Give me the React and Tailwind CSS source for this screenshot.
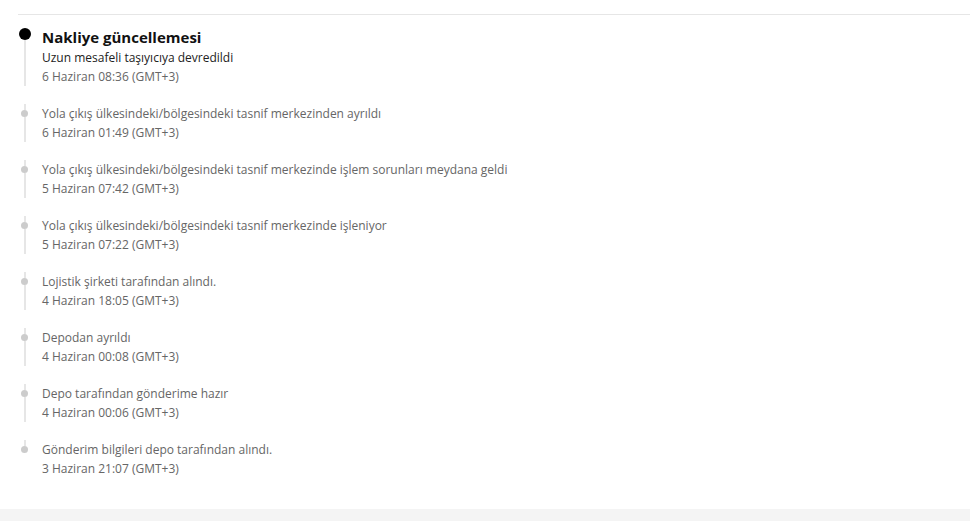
import React from 'react';

const events = [
  { text: 'Yola çıkış ülkesindeki/bölgesindeki tasnif merkezinden ayrıldı', date: '6 Haziran 01:49 (GMT+3)' },
  { text: 'Yola çıkış ülkesindeki/bölgesindeki tasnif merkezinde işlem sorunları meydana geldi', date: '5 Haziran 07:42 (GMT+3)' },
  { text: 'Yola çıkış ülkesindeki/bölgesindeki tasnif merkezinde işleniyor', date: '5 Haziran 07:22 (GMT+3)' },
  { text: 'Lojistik şirketi tarafından alındı.', date: '4 Haziran 18:05 (GMT+3)' },
  { text: 'Depodan ayrıldı', date: '4 Haziran 00:08 (GMT+3)' },
  { text: 'Depo tarafından gönderime hazır', date: '4 Haziran 00:06 (GMT+3)' },
  { text: 'Gönderim bilgileri depo tarafından alındı.', date: '3 Haziran 21:07 (GMT+3)' },
];

const App = () => {
  return (
    <div className="min-h-[521px] bg-[#f4f4f4] font-['Open_Sans',sans-serif]">
      <div className="bg-white pt-[14px] pl-[18px] pb-[31px]">
        <div className="border-t border-[#e6e6e6] pt-[11px]">
          <ul>
            {/* Latest update */}
            <li className="flex pb-[18px]">
              <div className="flex w-[13px] flex-col items-center">
                <div className="h-[2px]" />
                <div className="h-[12px] w-[12px] rounded-full bg-black" />
                <div className="w-[2px] flex-1 bg-[#e6e6e6]" />
              </div>
              <div className="pl-[11px]">
                <h3 className="text-[15px] leading-[22px] font-bold text-[#111]">Nakliye güncellemesi</h3>
                <p className="text-[12px] leading-[19px] text-[#222]">Uzun mesafeli taşıyıcıya devredildi</p>
                <p className="text-[12px] leading-[19px] text-[#666]">6 Haziran 08:36 (GMT+3)</p>
              </div>
            </li>

            {events.map((ev, i) => {
              const last = i === events.length - 1;
              return (
                <li key={i} className={`flex ${last ? '' : 'pb-[18px]'}`}>
                  <div className="flex w-[13px] flex-col items-center">
                    <div className="h-[6px] w-[2px] bg-[#e6e6e6]" />
                    <div className="h-[7px] w-[7px] rounded-full bg-[#cccccc]" />
                    {!last && <div className="w-[2px] flex-1 bg-[#e6e6e6]" />}
                  </div>
                  <div className="pl-[11px]">
                    <p className="text-[12px] leading-[19px] text-[#666]">{ev.text}</p>
                    <p className="text-[12px] leading-[19px] text-[#666]">{ev.date}</p>
                  </div>
                </li>
              );
            })}
          </ul>
        </div>
      </div>
    </div>
  );
};

export default App;
